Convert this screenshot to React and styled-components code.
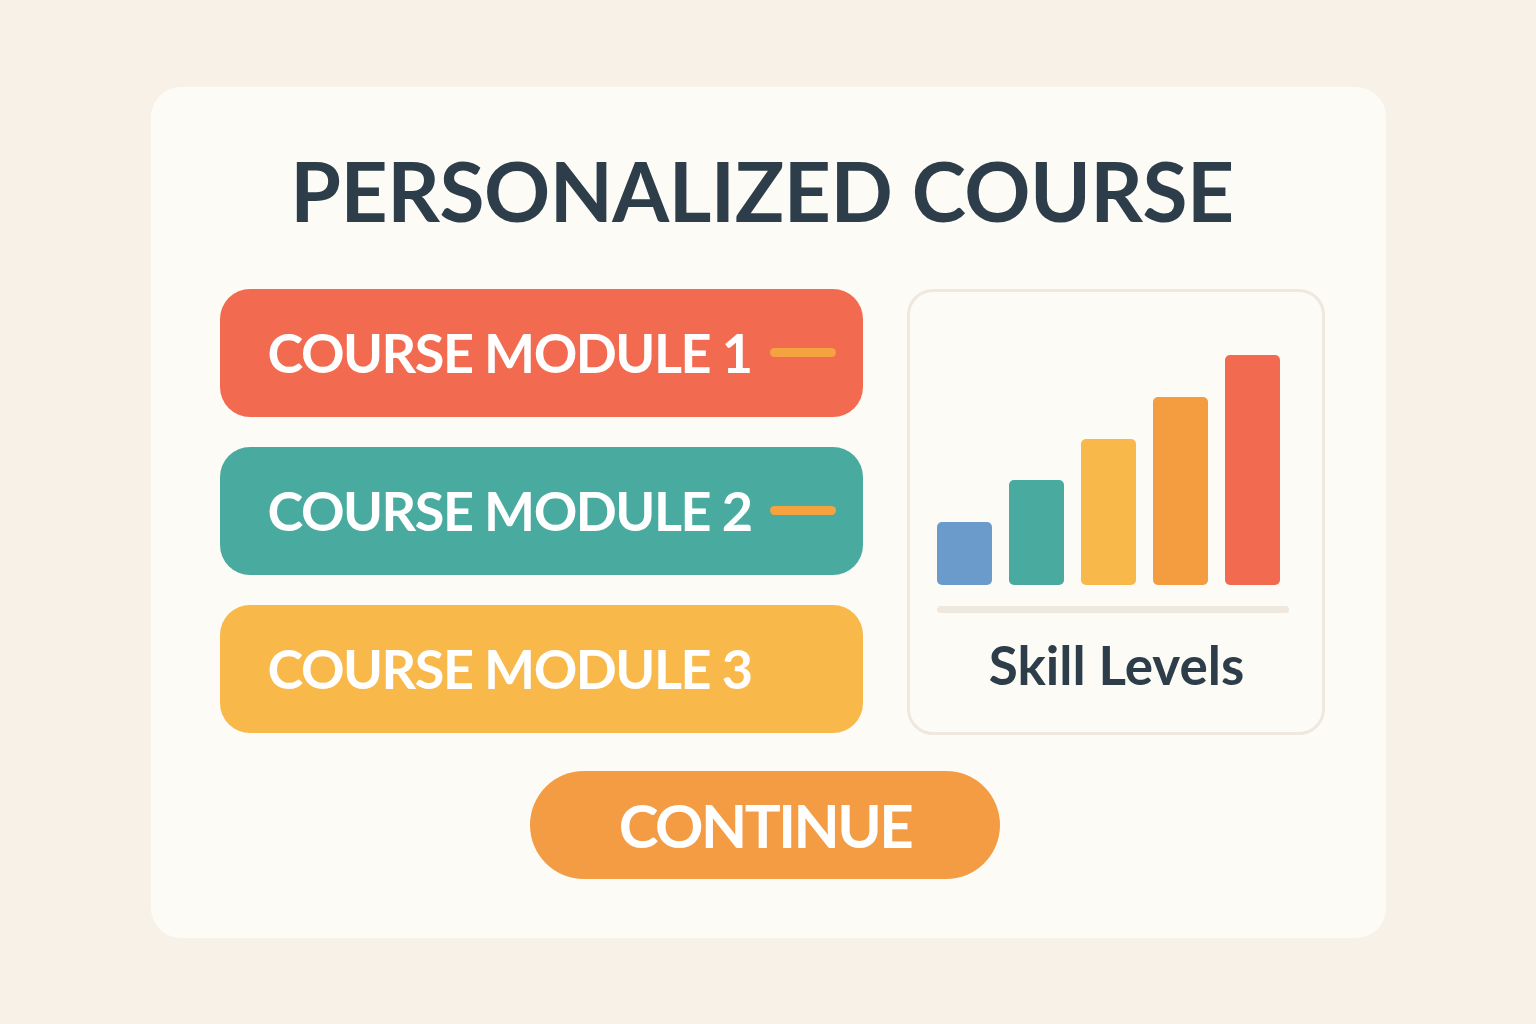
import styled, { createGlobalStyle } from "styled-components";

const GlobalStyle = createGlobalStyle`
  html, body {
    margin: 0;
    padding: 0;
    background: #f7f1e8;
  }
  body {
    font-family: Lato, "Open Sans", sans-serif;
  }
`;

const Page = styled.div`
  width: 100vw;
  height: 100vh;
  display: flex;
  align-items: center;
  justify-content: center;
`;

const Card = styled.div`
  box-sizing: border-box;
  width: 1235px;
  height: 851px;
  background: #fdfbf6;
  border-radius: 30px;
  display: flex;
  flex-direction: column;
  align-items: center;
  padding-top: 62px;
`;

const Title = styled.h1`
  margin: 0 12px 0 0;
  font-size: 82px;
  line-height: 1;
  font-weight: 700;
  color: #2d3e4a;
  letter-spacing: -0.5px;
`;

const Content = styled.div`
  display: flex;
  gap: 44px;
  margin: 58px 0 0 8px;
`;

const Modules = styled.div`
  display: flex;
  flex-direction: column;
  gap: 30px;
  width: 643px;
`;

const Module = styled.div`
  box-sizing: border-box;
  height: 128px;
  border-radius: 30px;
  background: ${(p) => p.$color};
  display: flex;
  align-items: center;
  padding-left: 48px;
  gap: 18px;
  color: #ffffff;
  font-size: 54px;
  font-weight: 700;
  letter-spacing: -1.5px;
`;

const Dash = styled.span`
  width: 66px;
  height: 9px;
  border-radius: 5px;
  background: #f4a340;
`;

const ChartCard = styled.div`
  box-sizing: border-box;
  width: 418px;
  height: 446px;
  border: 3px solid #eee8de;
  border-radius: 26px;
  display: flex;
  flex-direction: column;
  padding: 60px 33px 0 27px;
`;

const Bars = styled.div`
  display: flex;
  align-items: flex-end;
  gap: 17px;
  height: 233px;
`;

const Bar = styled.div`
  width: 55px;
  height: ${(p) => p.$h}px;
  background: ${(p) => p.$color};
  border-radius: 5px;
`;

const Baseline = styled.div`
  height: 7px;
  width: 352px;
  border-radius: 4px;
  background: #eee8de;
  margin-top: 21px;
`;

const ChartLabel = styled.div`
  margin-top: 20px;
  text-align: center;
  font-size: 53px;
  font-weight: 700;
  color: #2d3e4a;
  padding-left: 8px;
`;

const ContinueButton = styled.button`
  margin: 36px 6px 0 0;
  width: 470px;
  height: 108px;
  border: none;
  border-radius: 54px;
  background: #f49c44;
  color: #ffffff;
  font-family: Lato, "Open Sans", sans-serif;
  font-size: 60px;
  font-weight: 700;
  letter-spacing: -2.5px;
`;

const modules = [
  { label: "COURSE MODULE 1", color: "#f26b50", dash: true },
  { label: "COURSE MODULE 2", color: "#49ab9f", dash: true },
  { label: "COURSE MODULE 3", color: "#f8b84a", dash: false },
];

const bars = [
  { h: 63, color: "#6b9bcb" },
  { h: 105, color: "#49ab9f" },
  { h: 146, color: "#f8b84a" },
  { h: 188, color: "#f39c40" },
  { h: 230, color: "#f26b50" },
];

export default function App() {
  return (
    <>
      <GlobalStyle />
      <Page>
        <Card>
          <Title>PERSONALIZED COURSE</Title>
          <Content>
            <Modules>
              {modules.map((m) => (
                <Module key={m.label} $color={m.color}>
                  {m.label}
                  {m.dash && <Dash />}
                </Module>
              ))}
            </Modules>
            <ChartCard>
              <Bars>
                {bars.map((b, i) => (
                  <Bar key={i} $h={b.h} $color={b.color} />
                ))}
              </Bars>
              <Baseline />
              <ChartLabel>Skill Levels</ChartLabel>
            </ChartCard>
          </Content>
          <ContinueButton>CONTINUE</ContinueButton>
        </Card>
      </Page>
    </>
  );
}
